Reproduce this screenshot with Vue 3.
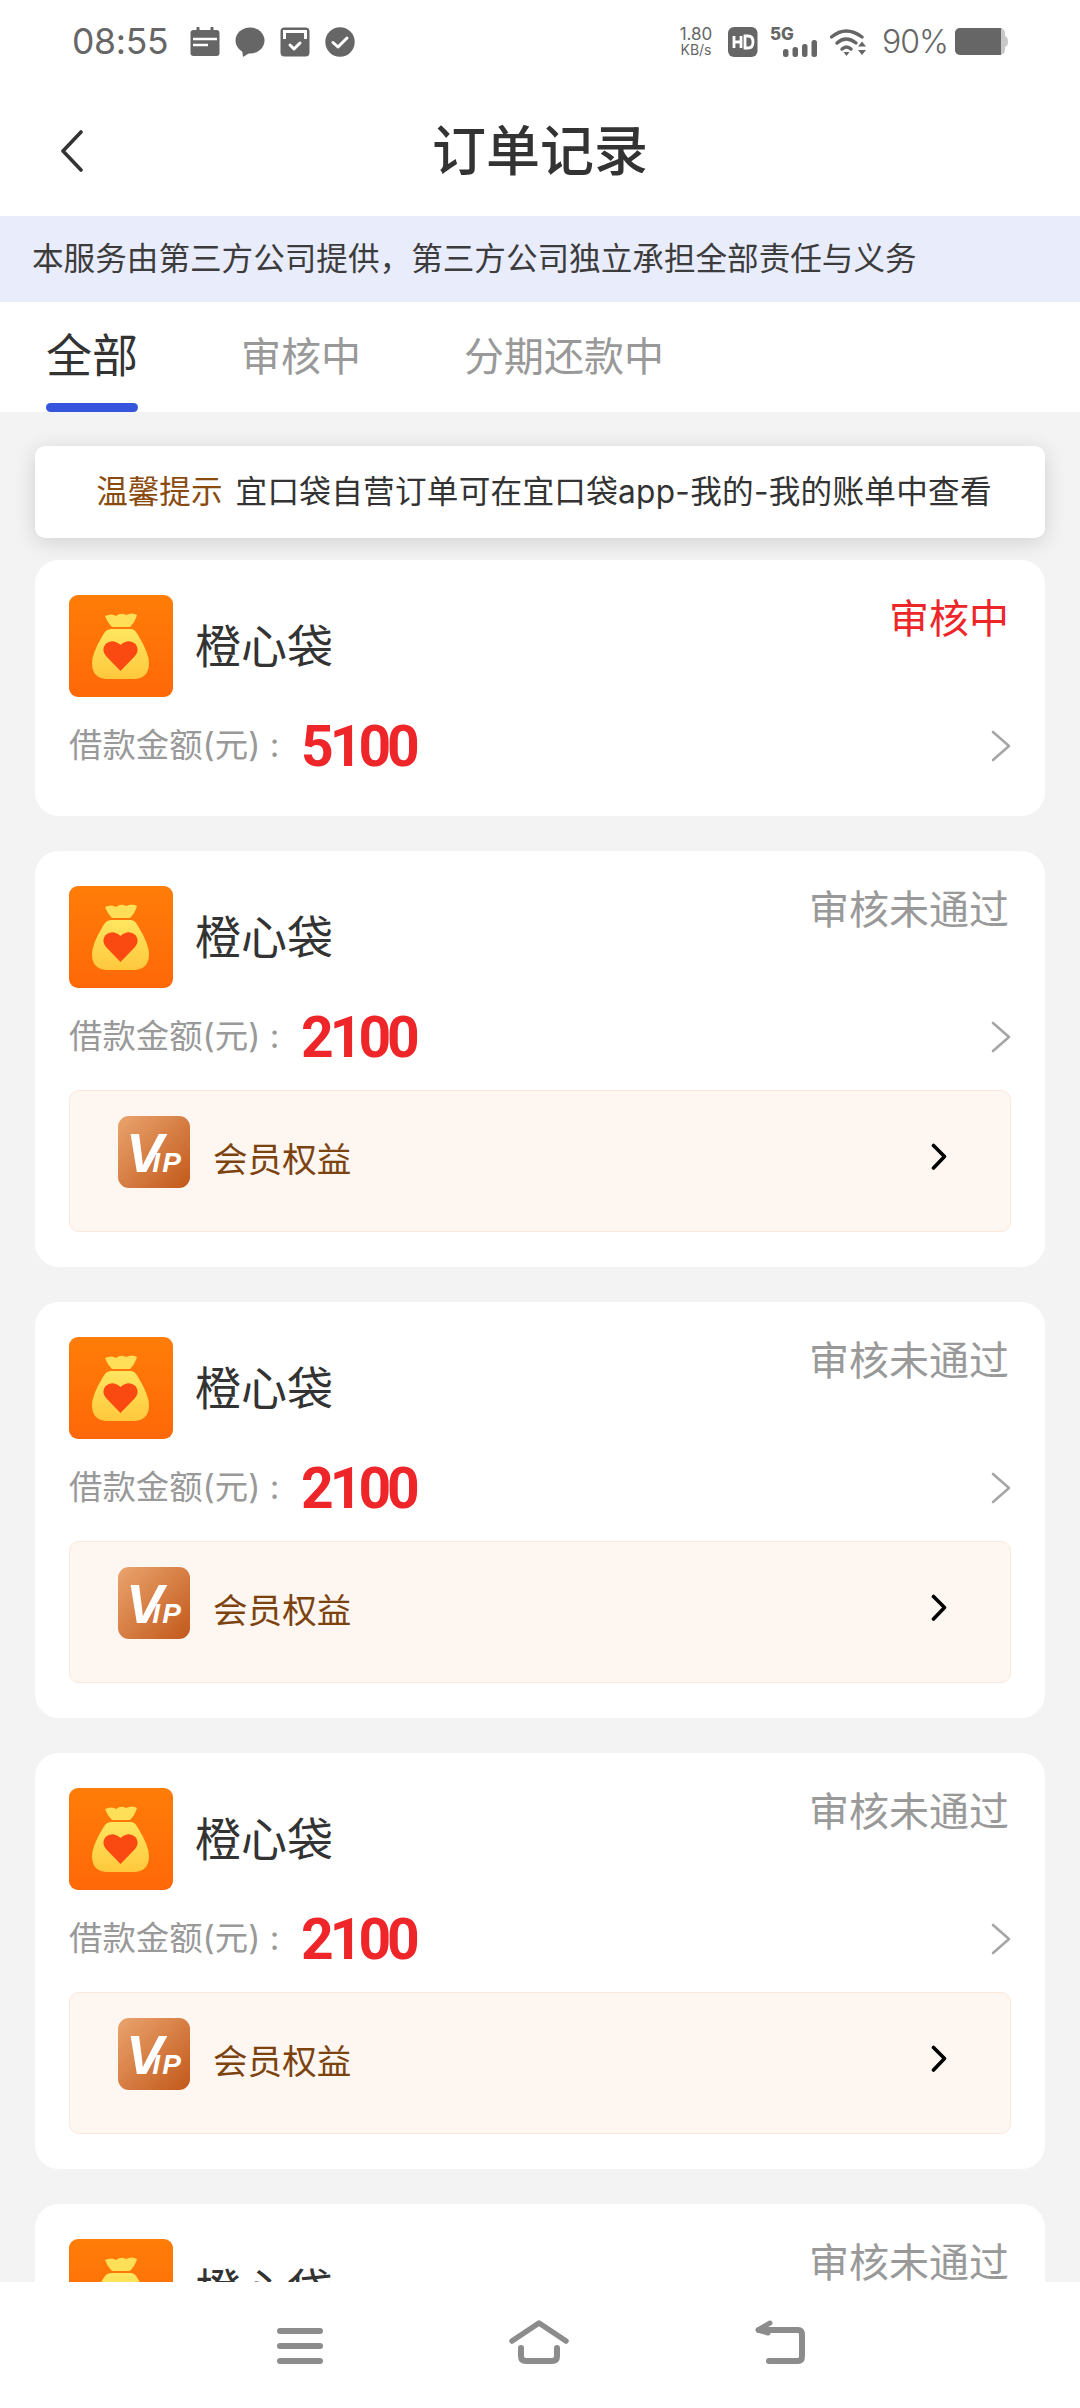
<template>
  <div class="page">
    <div class="status-bar">
      <div class="status-left">
        <span class="time">08:55</span>
        <svg class="notif first" width="30" height="30" viewBox="0 0 30 30">
          <path d="M8 1v4M22 1v4" stroke="#666" stroke-width="3" stroke-linecap="round" />
          <rect x="0.5" y="3" width="29" height="26" rx="3" fill="#666" />
          <path d="M3 12h24M3 18h15" stroke="#fff" stroke-width="2.6" />
        </svg>
        <svg class="notif" width="30" height="30" viewBox="0 0 30 30">
          <ellipse cx="15" cy="13.5" rx="14.5" ry="13" fill="#666" />
          <path d="M7 22l1 8 8-5z" fill="#666" />
        </svg>
        <svg class="notif" width="30" height="30" viewBox="0 0 30 30">
          <rect x="0.5" y="0.5" width="29" height="29" rx="4" fill="#666" />
          <path d="M3 3h24v9H24V6H6v6H3z" fill="#fff" />
          <path d="M10 18l4 4 6-6" stroke="#fff" stroke-width="3" fill="none" stroke-linecap="round" stroke-linejoin="round" />
        </svg>
        <svg class="notif" width="30" height="30" viewBox="0 0 30 30">
          <circle cx="15" cy="15" r="14.7" fill="#666" />
          <path d="M8 15.5l5 4.5 9-9" stroke="#fff" stroke-width="3" fill="none" stroke-linecap="round" stroke-linejoin="round" />
        </svg>
      </div>
      <div class="status-right">
        <div class="speed"><span>1.80</span><span class="speed-unit">KB/s</span></div>
        <svg width="30" height="30" viewBox="0 0 30 30">
          <rect width="29.5" height="30" rx="6" fill="#666" />
          <path d="M6 9v12M13 9v12M6 15h7" stroke="#fff" stroke-width="2.8" />
          <path d="M17 9h3q5 0 5 6t-5 6h-3z" fill="none" stroke="#fff" stroke-width="2.8" />
        </svg>
        <div class="signal">
          <span class="five-g">5G</span>
          <svg width="34" height="17" viewBox="0 0 34 17">
            <rect x="0" y="9" width="5.5" height="8" rx="2.5" fill="#666" />
            <rect x="9.5" y="7" width="5.5" height="10" rx="2.5" fill="#666" />
            <rect x="19" y="4" width="5.5" height="13" rx="2.5" fill="#666" />
            <rect x="28.5" y="0" width="5.5" height="17" rx="2.5" fill="#666" />
          </svg>
        </div>
        <svg class="wifi" width="38" height="28" viewBox="0 0 38 28">
          <path d="M1.500 9Q16-3 32 9" stroke="#666" stroke-width="3.400" fill="none" stroke-linecap="round" />
          <path d="M7 15Q16 7 26 15" stroke="#666" stroke-width="3.400" fill="none" stroke-linecap="round" />
          <path d="M12 21Q16.500 17 21 21" stroke="#666" stroke-width="3.400" fill="none" stroke-linecap="round" />
          <path d="M13.500 24h6l-3 4zM28 18.500l4-5 4 5zM28 22h8l-4 5z" fill="#666" />
        </svg>
        <span class="battery-text">90%</span>
        <svg class="battery" width="53" height="28" viewBox="0 0 53 28">
          <rect x="0" y="0" width="50" height="27" rx="5" fill="#c8c8c8" />
          <path d="M5 0H46V27H5a5 5 0 0 1-5-5V5a5 5 0 0 1 5-5z" fill="#666" />
          <path d="M50 8q3 1 3 5.500T50 19z" fill="#c8c8c8" />
        </svg>
      </div>
    </div>

    <div class="title-bar">
      <svg class="back" width="24" height="42" viewBox="0 0 24 42">
        <path d="M21 2L3 21l18 19" stroke="#333" stroke-width="3.600" fill="none" stroke-linecap="round" stroke-linejoin="round" />
      </svg>
      <h1 class="title">订单记录</h1>
    </div>

    <div class="banner">本服务由第三方公司提供，第三方公司独立承担全部责任与义务</div>

    <div class="tabs">
      <div v-for="(tab, i) in tabs" :key="tab" class="tab" :class="{ active: i === 0 }">{{ tab }}</div>
    </div>

    <div class="list">
      <div class="notice">
        <span class="notice-tag">温馨提示</span>
        <span class="notice-text">宜口袋自营订单可在宜口袋app-我的-我的账单中查看</span>
      </div>

      <div v-for="(order, i) in orders" :key="i" class="card">
        <div class="card-top">
          <svg class="logo" width="104" height="102" viewBox="0 0 104 102">
            <defs>
              <linearGradient :id="'bg' + i" x1="0" y1="0" x2="0" y2="1">
                <stop offset="0" stop-color="#ff7d08" />
                <stop offset="1" stop-color="#ff6808" />
              </linearGradient>
              <linearGradient :id="'bag' + i" x1="0" y1="0" x2="0" y2="1">
                <stop offset="0" stop-color="#ffe660" />
                <stop offset="1" stop-color="#ffc83c" />
              </linearGradient>
            </defs>
            <rect width="104" height="102" rx="9" :fill="'url(#bg' + i + ')'" />
            <path d="M36 21q7-3 11 0 5-4 10-1 6-3 11 0-2 7-7 12H43q-5-5-7-11z" fill="#ffdf58" />
            <path d="M42 34H62Q66 34 69 40 80 58 80 68 80 84 64 84H39Q23 84 23 68 23 58 34 40 37 34 42 34z" :fill="'url(#bag' + i + ')'" />
            <path d="M51.500 76L37 61q-5-6-.5-12 7-6 15 1 8-7 15-1 4.500 6-.5 12z" fill="#fa4a12" />
          </svg>
          <span class="name">橙心袋</span>
          <span class="state" :class="{ pending: order.pending }">{{ order.state }}</span>
        </div>
        <div class="amount-row">
          <span class="amount-label">借款金额(元) :</span>
          <span class="amount">{{ order.amount }}</span>
          <svg class="more" width="20" height="32" viewBox="0 0 20 32">
            <path d="M2 2l16 14L2 30" stroke="#a6a6a6" stroke-width="2.600" fill="none" stroke-linecap="round" stroke-linejoin="round" />
          </svg>
        </div>
        <div v-if="order.vip" class="vip">
          <svg class="vip-icon" width="72" height="72" viewBox="0 0 72 72">
            <defs>
              <linearGradient :id="'vip' + i" x1="0" y1="0" x2="1" y2="1">
                <stop offset="0" stop-color="#eaa46e" />
                <stop offset="1" stop-color="#c2581a" />
              </linearGradient>
            </defs>
            <rect width="72" height="72" rx="11" :fill="'url(#vip' + i + ')'" />
            <text x="8" y="56" class="vip-v">V<tspan class="vip-ip" dx="-11">IP</tspan></text>
          </svg>
          <span class="vip-text">会员权益</span>
          <svg class="vip-arrow" width="16" height="28" viewBox="0 0 16 28">
            <path d="M2.500 2.500L13.500 13.500 2.500 25" stroke="#000" stroke-width="3.600" fill="none" stroke-linecap="round" stroke-linejoin="round" />
          </svg>
        </div>
      </div>
    </div>

    <div class="nav-bar">
      <svg width="46" height="36" viewBox="0 0 46 36">
        <path d="M3 3h40M3 18h40M3 33h40" stroke="#8c8c8c" stroke-width="6" stroke-linecap="round" />
      </svg>
      <svg width="60" height="44" viewBox="0 0 60 44">
        <path d="M3 21L30 3l27 18" stroke="#8c8c8c" stroke-width="5.500" fill="none" stroke-linecap="round" stroke-linejoin="round" />
        <path d="M12 28v8q0 5 5 5h26q5 0 5-5v-8" stroke="#8c8c8c" stroke-width="6" fill="none" stroke-linecap="round" />
      </svg>
      <svg width="50" height="44" viewBox="0 0 50 44">
        <path d="M4 10h39q4 0 4 5v21q0 5-4 5H14" stroke="#8c8c8c" stroke-width="6" fill="none" stroke-linecap="round" stroke-linejoin="round" />
        <path d="M15 3L3 10l10 3" stroke="#8c8c8c" stroke-width="5" fill="none" stroke-linecap="round" stroke-linejoin="round" />
      </svg>
    </div>
  </div>
</template>

<script setup>
const tabs = ['全部', '审核中', '分期还款中']

const orders = [
  { state: '审核中', amount: '5100', pending: true, vip: false },
  { state: '审核未通过', amount: '2100', pending: false, vip: true },
  { state: '审核未通过', amount: '2100', pending: false, vip: true },
  { state: '审核未通过', amount: '2100', pending: false, vip: true },
  { state: '审核未通过', amount: '2100', pending: false, vip: true }
]
</script>

<style>
html,
body {
  margin: 0;
  background: #fff;
}
</style>

<style scoped>
.page {
  width: 1080px;
  height: 2408px;
  display: flex;
  flex-direction: column;
  overflow: hidden;
  background: #fff;
  font-family: Inter, "Noto Sans CJK SC", sans-serif;
  color: #333;
}

.status-bar {
  height: 90px;
  flex: none;
  display: flex;
  justify-content: space-between;
  align-items: flex-start;
  padding: 27px 72px 0 72px;
  box-sizing: border-box;
  color: #666;
}

.status-left,
.status-right {
  display: flex;
  align-items: center;
  height: 30px;
}

.time {
  font-size: 35.5px;
  line-height: 32px;
  width: 96px;
  letter-spacing: -0.3px;
}

.notif {
  margin-left: 15px;
}

.notif.first {
  margin-left: 22px;
}

.speed {
  display: flex;
  flex-direction: column;
  align-items: center;
  font-size: 17px;
  line-height: 15px;
  margin-right: 14px;
  width: 36px;
}

.speed-unit {
  font-size: 14px;
  line-height: 15px;
}

.signal {
  width: 47px;
  height: 30px;
  margin-left: 12px;
  position: relative;
}

.five-g {
  position: absolute;
  left: 0;
  top: -2px;
  font-size: 17px;
  line-height: 18px;
  font-weight: 800;
}

.signal svg {
  position: absolute;
  right: 0;
  bottom: 0;
}

.wifi {
  margin-left: 13px;
}

.battery-text {
  font-size: 32px;
  line-height: 32px;
  margin-left: 14px;
  width: 61px;
  font-weight: 300;
  letter-spacing: -1px;
}

.battery {
  margin-left: 12px;
}

.title-bar {
  height: 126px;
  flex: none;
  position: relative;
  display: flex;
  align-items: center;
  justify-content: center;
}

.back {
  position: absolute;
  left: 60px;
  top: 40px;
}

.title {
  margin: 0 0 2px;
  font-size: 54px;
  font-weight: 500;
  line-height: 70px;
  color: #333;
}

.banner {
  height: 86px;
  flex: none;
  background: #e9ecfb;
  padding-left: 32px;
  font-size: 31.6px;
  line-height: 86px;
  color: #3c3c3c;
}

.tabs {
  height: 110px;
  flex: none;
  display: flex;
  padding-left: 46px;
  background: #fff;
}

.tab {
  font-size: 40px;
  line-height: 109px;
  color: #999;
  position: relative;
  height: 110px;
}

.tab:nth-child(1) {
  margin-right: 103px;
}

.tab:nth-child(2) {
  margin-right: 103px;
}

.tab.active {
  font-size: 46px;
  line-height: 107px;
  color: #333;
}

.tab.active::after {
  content: "";
  position: absolute;
  left: 0;
  right: 0;
  bottom: 0;
  height: 9px;
  border-radius: 5px;
  background: #3556dc;
}

.list {
  flex: 1;
  min-height: 0;
  overflow: hidden;
  background: #f3f3f3;
  padding: 34px 35px 0 35px;
}

.notice {
  height: 92px;
  box-sizing: border-box;
  padding: 0 0 6px 8px;
  background: #fff;
  border-radius: 10px;
  box-shadow: 0 4px 22px rgba(0, 0, 0, 0.14);
  display: flex;
  align-items: center;
  justify-content: center;
  gap: 13px;
  font-size: 31.6px;
  margin-bottom: 22px;
  color: #333;
  position: relative;
}

.notice-tag {
  color: #8a4b10;
}

.notice-text {
  letter-spacing: 0.28px;
}

.card {
  background: #fff;
  border-radius: 24px;
  padding: 35px 34px 30px;
  margin-bottom: 35px;
  position: relative;
}

.card-top {
  display: flex;
  align-items: center;
  position: relative;
  height: 102px;
}

.name {
  margin: 0 0 0 22px;
  font-size: 46px;
  line-height: 60px;
  color: #333;
}

.state {
  position: absolute;
  right: 2px;
  top: -2px;
  font-size: 40px;
  line-height: 52px;
  color: #999;
}

.state.pending {
  color: #ee2529;
}

.amount-row {
  height: 80px;
  margin-top: 9px;
  display: flex;
  align-items: center;
  position: relative;
}

.amount-label {
  font-size: 33.4px;
  line-height: 44px;
  margin-bottom: 2px;
  color: #999;
  width: 232px;
  white-space: nowrap;
}

.amount {
  font-family: Roboto, sans-serif;
  font-size: 57px;
  font-weight: 700;
  letter-spacing: -4px;
  color: #ee2529;
}

.more {
  position: absolute;
  right: 0;
  top: 24px;
}

.vip {
  height: 142px;
  box-sizing: border-box;
  margin-top: 13px;
  margin-bottom: 5px;
  background: #fdf6f1;
  border: 1px solid #fbe9dd;
  border-radius: 10px;
  display: flex;
  align-items: flex-start;
  padding: 25px 0 0 48px;
  position: relative;
}

.vip-v {
  font-family: "Liberation Sans", sans-serif;
  font-size: 56px;
  font-weight: 700;
  font-style: italic;
  fill: #fff;
}

.vip-ip {
  font-size: 28px;
  letter-spacing: 2px;
}

.vip-text {
  margin-left: 23px;
  margin-top: 18px;
  font-size: 34.6px;
  line-height: 50px;
  color: #7c430f;
}

.vip-arrow {
  position: absolute;
  right: 63px;
  top: 52px;
}

.nav-bar {
  height: 126px;
  flex: none;
  background: #fff;
  display: flex;
  align-items: flex-end;
  justify-content: space-between;
  padding: 0 275px 44px 277px;
  box-sizing: border-box;
}
</style>
